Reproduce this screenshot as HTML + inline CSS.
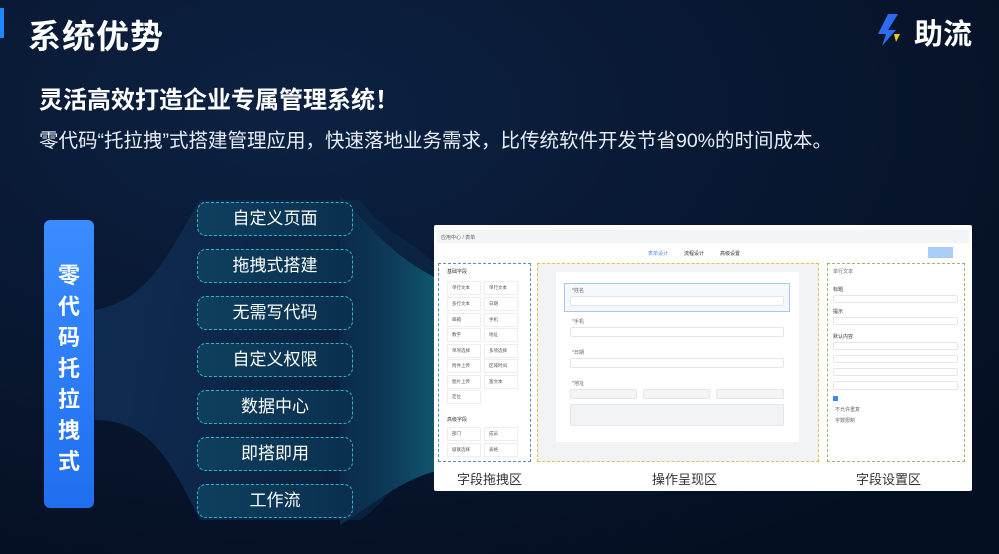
<!DOCTYPE html>
<html><head><meta charset="utf-8"><style>
*{margin:0;padding:0;box-sizing:border-box}
body{width:999px;height:554px;overflow:hidden;background:#071428;font-family:"Liberation Sans","Noto Sans CJK SC",sans-serif;position:relative;color:#fff}
.abs{position:absolute}
.btn{position:absolute;left:197px;width:156px;height:34px;border:1.5px dashed #2fb3c8;border-radius:9px;background:linear-gradient(90deg,#0e3f5e,#0a2f4e);color:#fff;font-size:17px;text-align:center;line-height:31px}
.p{position:absolute;font-size:5px;color:#666}
.f{position:absolute;background:#fff;border:1px solid #e4e6ea;border-radius:2px}
.chip{position:absolute;width:44px;height:14px;border:1px solid #eee;font-size:4.5px;color:#555;line-height:12px;padding-left:4px;background:#fff}
</style></head><body>
<svg class="abs" style="left:0;top:0" width="999" height="554">
<defs>
<radialGradient id="bg" cx="0.3" cy="0.2" r="0.9"><stop offset="0" stop-color="#0c2142"/><stop offset="1" stop-color="#050f22"/></radialGradient>
<linearGradient id="fun" x1="0" x2="1"><stop offset="0" stop-color="#0b2a4a"/><stop offset="0.5" stop-color="#0d3a58"/><stop offset="1" stop-color="#0f5a70"/></linearGradient>
<linearGradient id="fun2" x1="0" x2="1"><stop offset="0" stop-color="#0f2d55" stop-opacity="0.9"/><stop offset="1" stop-color="#0b2a48" stop-opacity="0.5"/></linearGradient>
</defs>
<rect width="999" height="554" fill="url(#bg)"/>
<path d="M95,310 C150,300 170,250 200,200 L360,200 C390,240 410,235 440,270 L440,440 C410,460 390,500 360,520 L200,520 C170,460 150,420 95,420 Z" fill="url(#fun2)"/>
<path d="M340,195 C380,240 400,260 440,280 L440,470 C400,480 380,500 340,525 Z" fill="url(#fun)"/>
<rect x="0" y="8" width="4" height="30" fill="#1e88ff"/>
</svg>
<div class="abs" style="left:28px;top:10px;font-size:33px;font-weight:bold;letter-spacing:1px">系统优势</div>
<svg class="abs" style="left:874px;top:12px" width="40" height="36"><polygon points="14,2 24,2 14,18 22,18 8,34 12,22 4,22" fill="#2c6cf0"/><polygon points="20,22 26,22 22,30" fill="#f5c518"/></svg>
<div class="abs" style="left:914px;top:11px;font-size:29px;font-weight:bold">助流</div>
<div class="abs" style="left:39px;top:80px;font-size:24px;font-weight:bold">灵活高效打造企业专属管理系统！</div>
<div class="abs" style="left:39px;top:124px;font-size:19.5px;color:#e8eef8;white-space:nowrap">零代码“托拉拽”式搭建管理应用，快速落地业务需求，比传统软件开发节省90%的时间成本。</div>
<div class="abs" style="left:44px;top:220px;width:50px;height:288px;border-radius:6px;background:linear-gradient(180deg,#3a8cff,#1f6ff0);font-size:22px;font-weight:bold;text-align:center;line-height:31px;padding-top:40px">零<br>代<br>码<br>托<br>拉<br>拽<br>式</div>
<div class="btn" style="top:202px">自定义页面</div>
<div class="btn" style="top:249px">拖拽式搭建</div>
<div class="btn" style="top:296px">无需写代码</div>
<div class="btn" style="top:343px">自定义权限</div>
<div class="btn" style="top:390px">数据中心</div>
<div class="btn" style="top:437px">即搭即用</div>
<div class="btn" style="top:484px">工作流</div>
<div class="abs" style="left:434px;top:225px;width:538px;height:266px;background:#fff;border-radius:2px"></div>
<div class="abs" style="left:437px;top:230px;width:532px;height:13px;background:#f3f4f6"></div>
<div class="p" style="left:441px;top:234px">应用中心 / 表单</div>
<div class="p" style="left:648px;top:250px;color:#4a90e2">表单设计</div>
<div class="p" style="left:684px;top:250px;color:#333">流程设计</div>
<div class="p" style="left:720px;top:250px;color:#333">高级设置</div>
<div class="abs" style="left:928px;top:247px;width:25px;height:11px;background:#a9cdf7"></div>
<div class="abs" style="left:438px;top:263px;width:93px;height:199px;border:1px dashed #5d8db8;background:#fff"></div>
<div class="abs" style="left:537px;top:263px;width:282px;height:199px;border:1px dashed #e6c24a;background:#f2f3f5"></div>
<div class="abs" style="left:556px;top:272px;width:243px;height:170px;background:#fff"></div>
<div class="abs" style="left:564px;top:283px;width:226px;height:29px;border:1px solid #a8c6e8;background:#f5f9fe"></div>
<div class="p" style="left:572px;top:287px">*姓名</div><div class="f" style="left:570px;top:296px;width:214px;height:10px"></div>
<div class="p" style="left:572px;top:318px">*手机</div><div class="f" style="left:570px;top:327px;width:214px;height:10px"></div>
<div class="p" style="left:572px;top:349px">*日期</div><div class="f" style="left:570px;top:358px;width:214px;height:10px"></div>
<div class="p" style="left:572px;top:380px">*地址</div>
<div class="f" style="left:570px;top:389px;width:67px;height:10px;background:#f5f5f5"></div>
<div class="f" style="left:643px;top:389px;width:67px;height:10px;background:#f5f5f5"></div>
<div class="f" style="left:716px;top:389px;width:68px;height:10px;background:#f5f5f5"></div>
<div class="f" style="left:570px;top:404px;width:214px;height:22px;background:#f2f3f5"></div>
<div class="abs" style="left:827px;top:263px;width:138px;height:199px;border:1px dashed #9ab873;background:#fff"></div>
<div class="p" style="left:833px;top:268px">单行文本</div>
<div class="p" style="left:833px;top:286px;color:#333">标题</div><div class="f" style="left:833px;top:295px;width:125px;height:8px"></div>
<div class="p" style="left:833px;top:308px;color:#333">提示</div><div class="f" style="left:833px;top:317px;width:125px;height:8px"></div>
<div class="p" style="left:833px;top:333px;color:#333">默认内容</div>
<div class="f" style="left:833px;top:342px;width:125px;height:8px"></div>
<div class="f" style="left:833px;top:355px;width:125px;height:8px"></div>
<div class="f" style="left:833px;top:368px;width:125px;height:8px"></div>
<div class="f" style="left:833px;top:381px;width:125px;height:9px"></div>
<div class="abs" style="left:833px;top:396px;width:5px;height:5px;background:#3f86e6"></div>
<div class="p" style="left:835px;top:406px">不允许重复</div><div class="p" style="left:835px;top:417px">字数限制</div>
<div class="p" style="left:447px;top:268px;color:#333">基础字段</div>
<div class="chip" style="left:447px;top:281px;width:34px">单行文本</div><div class="chip" style="left:484px;top:281px;width:34px">单行文本</div>
<div class="chip" style="left:447px;top:297px;width:34px">多行文本</div><div class="chip" style="left:484px;top:297px;width:34px">日期</div>
<div class="chip" style="left:447px;top:313px;width:34px">邮箱</div><div class="chip" style="left:484px;top:313px;width:34px">手机</div>
<div class="chip" style="left:447px;top:328px;width:34px">数字</div><div class="chip" style="left:484px;top:328px;width:34px">地址</div>
<div class="chip" style="left:447px;top:344px;width:34px">单项选择</div><div class="chip" style="left:484px;top:344px;width:34px">多项选择</div>
<div class="chip" style="left:447px;top:359px;width:34px">附件上传</div><div class="chip" style="left:484px;top:359px;width:34px">区域时间</div>
<div class="chip" style="left:447px;top:375px;width:34px">图片上传</div><div class="chip" style="left:484px;top:375px;width:34px">富文本</div>
<div class="chip" style="left:447px;top:390px;width:34px">定位</div>
<div class="p" style="left:447px;top:416px;color:#333">高级字段</div>
<div class="chip" style="left:447px;top:427px;width:34px">部门</div><div class="chip" style="left:484px;top:427px;width:34px">成员</div>
<div class="chip" style="left:447px;top:443px;width:34px">级联选择</div><div class="chip" style="left:484px;top:443px;width:34px">表格</div>
<div class="abs" style="left:457px;top:469px;font-size:13px;color:#333">字段拖拽区</div>
<div class="abs" style="left:652px;top:469px;font-size:13px;color:#333">操作呈现区</div>
<div class="abs" style="left:856px;top:469px;font-size:13px;color:#333">字段设置区</div>
</body></html>
